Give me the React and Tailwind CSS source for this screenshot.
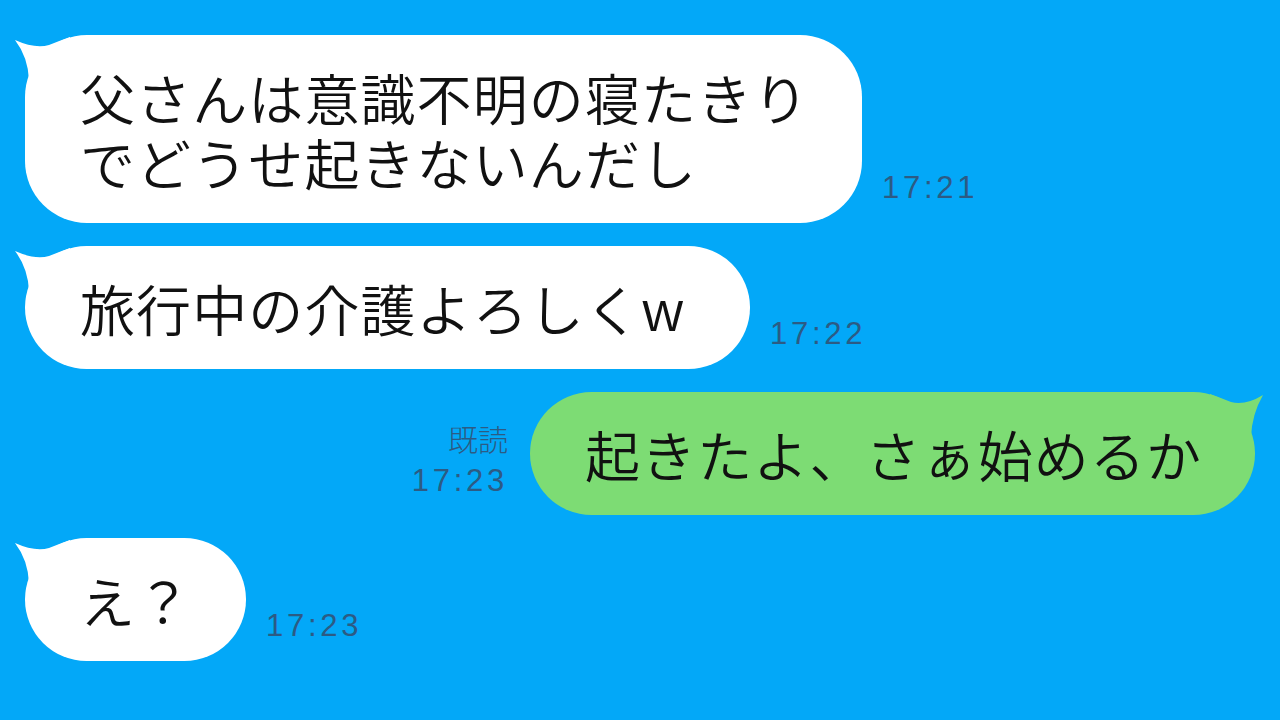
import React from "react";

const JP = { fontFamily: '"Noto Sans CJK JP", "Noto Sans", sans-serif' };
const TS = { fontFamily: '"Liberation Sans", "Noto Sans", sans-serif' };

function LeftTail() {
  return (
    <svg className="absolute left-0 top-0 overflow-visible" width="60" height="60" viewBox="0 0 60 60">
      <path d="M -10 5 Q 10 14 24 10 Q 34 6 45 2 L 45 45 L 4 45 Q 3 22 -10 5 Z" fill="#ffffff" />
    </svg>
  );
}

function RightTail() {
  return (
    <svg className="absolute right-0 top-0 overflow-visible" width="60" height="60" viewBox="0 0 60 60">
      <path d="M 68 3 Q 50 14 36 10 Q 26 6 15 2 L 15 45 L 56 45 Q 57 22 68 3 Z" fill="#7ddc74" />
    </svg>
  );
}

function Time({ children }) {
  return (
    <div className="text-[31px] leading-none tracking-[0.12em] text-[#2c5b84] font-light" style={TS}>
      {children}
    </div>
  );
}

function LeftMsg({ lines, width, time }) {
  return (
    <div className="flex items-end gap-[20px] pl-[25px]">
      <div
        className="relative bg-white rounded-[62px] px-[55px] py-[29px] text-[55px] leading-[65px] tracking-[0.02em] font-[350] text-[#111] whitespace-nowrap"
        style={{ ...JP, width }}
      >
        <LeftTail />
        {lines.map((l, i) => (
          <div key={i} className="relative">{l}</div>
        ))}
      </div>
      <div className="mb-[20px]">
        <Time>{time}</Time>
      </div>
    </div>
  );
}

export default function App() {
  return (
    <div className="w-[1280px] h-[720px] bg-[#03a8f8] overflow-hidden flex flex-col gap-[23px] pt-[35px]">
      <LeftMsg lines={["父さんは意識不明の寝たきり", "でどうせ起きないんだし"]} width={837} time="17:21" />
      <LeftMsg lines={["旅行中の介護よろしくw"]} width={725} time="17:22" />
      <div className="flex items-end justify-end gap-[22px] pr-[25px]">
        <div className="mb-[19px] flex flex-col items-end gap-[12px]">
          <div className="text-[30px] leading-none font-light text-[#2c5b84]" style={JP}>既読</div>
          <Time>17:23</Time>
        </div>
        <div
          className="relative bg-[#7ddc74] rounded-[62px] px-[55px] py-[29px] text-[55px] leading-[65px] tracking-[0.02em] font-[350] text-[#111] whitespace-nowrap"
          style={{ ...JP, width: 725 }}
        >
          <RightTail />
          <div className="relative">起きたよ、さぁ始めるか</div>
        </div>
      </div>
      <LeftMsg lines={["え？"]} width={221} time="17:23" />
    </div>
  );
}
